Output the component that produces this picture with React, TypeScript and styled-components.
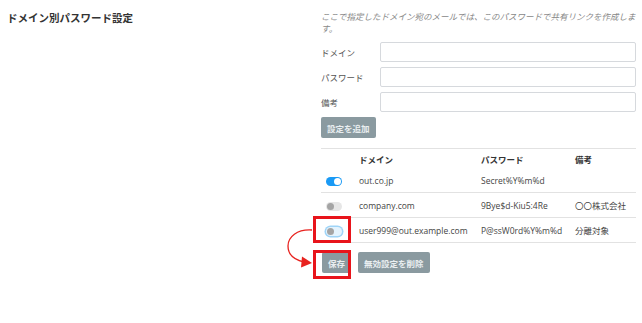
import React from 'react';
import styled, { createGlobalStyle } from 'styled-components';

const GlobalStyle = createGlobalStyle`
  html, body {
    margin: 0;
    padding: 0;
    background: #fff;
  }
  body {
    font-family: "Noto Sans", "Noto Sans CJK JP", sans-serif;
    color: #333;
  }
`;

const rows = [
  { on: true, focus: false, domain: 'out.co.jp', password: 'Secret%Y%m%d', note: '' },
  { on: false, focus: false, domain: 'company.com', password: '9Bye$d-Kiu5:4Re', note: '〇〇株式会社' },
  { on: false, focus: true, domain: 'user999@out.example.com', password: 'P@ssW0rd%Y%m%d', note: '分離対象' },
];

const App = () => {
  return (
    <>
      <GlobalStyle />
      <Page>
        <Side>
          <Title>ドメイン別パスワード設定</Title>
        </Side>
        <Main>
          <Description>ここで指定したドメイン宛のメールでは、このパスワードで共有リンクを作成します。</Description>
          <Field>
            <Label>ドメイン</Label>
            <Input />
          </Field>
          <Field>
            <Label>パスワード</Label>
            <Input />
          </Field>
          <Field>
            <Label>備考</Label>
            <Input />
          </Field>
          <Button>設定を追加</Button>
          <Table>
            <thead>
              <tr>
                <Th style={{ width: 38 }}></Th>
                <Th style={{ width: 122 }}>ドメイン</Th>
                <Th style={{ width: 94 }}>パスワード</Th>
                <Th>備考</Th>
              </tr>
            </thead>
            <tbody>
              {rows.map((r, i) => (
                <Tr key={i}>
                  <Td>
                    <Toggle on={r.on} focus={r.focus}>
                      <Knob on={r.on} />
                    </Toggle>
                  </Td>
                  <Td>{r.domain}</Td>
                  <Td>{r.password}</Td>
                  <Td>{r.note}</Td>
                </Tr>
              ))}
            </tbody>
          </Table>
          <Actions>
            <Button>保存</Button>
            <Button>無効設定を削除</Button>
          </Actions>
          <Mark style={{ left: -8, top: 216, width: 38, height: 27 }} />
          <Mark style={{ left: -8, top: 250, width: 38, height: 29 }} />
          <Arrow width="30" height="50" viewBox="0 0 30 50">
            <path d="M 25 9 C 10 8, 1 16, 1 25 C 1 34, 8 39, 17 41" fill="none" stroke="#e8231f" strokeWidth="1.3" />
            <polygon points="15,35.5 25,42 14,46.5" fill="#e8231f" />
          </Arrow>
        </Main>
      </Page>
    </>
  );
};

export default App;

interface ToggleProps {
  on: boolean;
  focus: boolean;
}

const Page = styled.div`
  display: flex;
  width: 642px;
  height: 323px;
`;

const Side = styled.div`
  width: 314px;
  padding: 10px 0 0 7px;
  box-sizing: border-box;
`;

const Title = styled.div`
  font-size: 10.5px;
  font-weight: 700;
  color: #333;
  font-family: "Noto Sans CJK JP", sans-serif;
`;

const Main = styled.div`
  position: relative;
  width: 315px;
  margin-left: 7px;
  padding-top: 10px;
  display: flex;
  flex-direction: column;
`;

const Description = styled.div`
  font-size: 8.5px;
  line-height: 12px;
  color: #888;
  font-style: italic;
  font-family: "Noto Sans CJK JP", sans-serif;
  margin-bottom: 8px;
`;

const Field = styled.div`
  display: flex;
  align-items: center;
  margin-bottom: 5px;
`;

const Label = styled.div`
  width: 59px;
  font-size: 8.5px;
  color: #555;
  font-family: "Noto Sans CJK JP", sans-serif;
`;

const Input = styled.div`
  flex: 1;
  height: 18px;
  border: 1px solid #d6d9dd;
  border-radius: 2px;
  background: #fff;
`;

const Button = styled.button`
  height: 21px;
  padding: 0 6px;
  border: none;
  border-radius: 2px;
  background: #8a9aa0;
  color: #e9eef0;
  font-size: 8.5px;
  font-weight: 700;
  font-family: "Noto Sans CJK JP", sans-serif;
  align-self: flex-start;
`;

const Table = styled.table`
  width: 100%;
  border-collapse: collapse;
  margin-top: 10px;
  border-top: 1px solid #e2e2e2;
  font-size: 8.5px;
  color: #444;
`;

const Th = styled.th`
  height: 19px;
  text-align: left;
  font-weight: 700;
  padding: 0;
  font-family: "Noto Sans CJK JP", sans-serif;
  color: #333;
`;

const Tr = styled.tr`
  border-bottom: 1px solid #e2e2e2;
`;

const Td = styled.td`
  height: 24px;
  padding: 0;
  vertical-align: middle;
  font-family: "Open Sans", "Noto Sans CJK JP", sans-serif;
  &:first-child {
    padding-left: 5px;
  }
`;

const Toggle = styled.span<ToggleProps>`
  display: inline-flex;
  align-items: center;
  justify-content: ${p => (p.on ? 'flex-end' : 'flex-start')};
  width: 16px;
  height: 9px;
  padding: 1px;
  box-sizing: border-box;
  border-radius: 5px;
  background: ${p => (p.on ? '#1a9af5' : p.focus ? '#e4f3fd' : '#e6e6e6')};
  box-shadow: ${p => (p.focus ? '0 0 0 1.5px #9fd4f7' : 'none')};
  margin-top: 3px;
`;

const Knob = styled.span<{ on: boolean }>`
  width: 7px;
  height: 7px;
  border-radius: 50%;
  background: ${p => (p.on ? '#fff' : '#a4a4a4')};
`;

const Actions = styled.div`
  display: flex;
  gap: 7px;
  margin-top: 9px;
  margin-left: 1px;
`;

const Mark = styled.div`
  position: absolute;
  box-sizing: border-box;
  border: 3px solid #e8141b;
`;

const Arrow = styled.svg`
  position: absolute;
  left: -34px;
  top: 221px;
`;
